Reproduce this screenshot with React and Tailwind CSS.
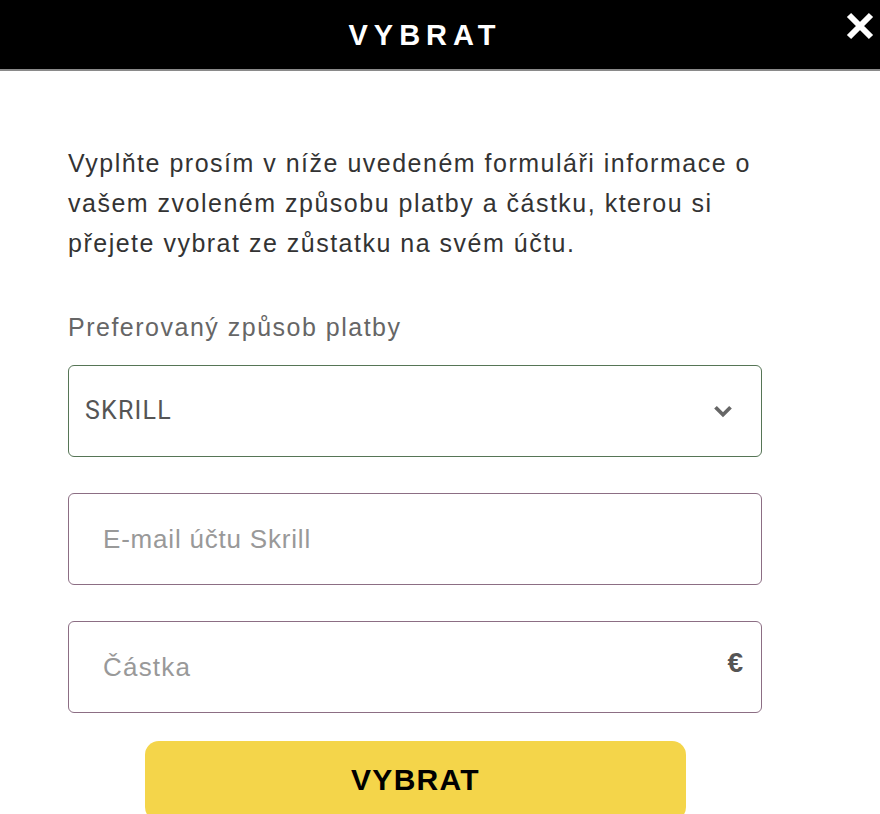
import React, { useState } from 'react';

const App = () => {
  const [method, setMethod] = useState('SKRILL');

  return (
    <div className="w-[880px] h-[814px] overflow-hidden bg-white font-['Liberation_Sans',Arial,sans-serif]">
      <div className="relative h-[71px] bg-black border-b-2 border-[#8a8a8a] flex items-center justify-center">
        <h1 className="text-white text-[29px] font-bold tracking-[6px] mr-[30px] pt-[2px]">VYBRAT</h1>
        <button className="absolute right-[5px] top-[11px] w-[30px] h-[30px] text-white">
          <svg viewBox="0 0 30 30" className="w-[30px] h-[30px]">
            <path d="M4 4 L26 26 M26 4 L4 26" stroke="white" strokeWidth="6" strokeLinecap="butt" />
          </svg>
        </button>
      </div>

      <div className="pl-[68px] pr-[100px] pt-[72px]">
        <p className="text-[#333] text-[25px] tracking-[1.5px] leading-[40px]">
          Vyplňte prosím v níže uvedeném formuláři informace o vašem zvoleném způsobu platby a částku, kterou si přejete vybrat ze zůstatku na svém účtu.
        </p>

        <div className="mt-[44px] text-[#666] text-[25px] tracking-[1.5px] leading-[40px]">Preferovaný způsob platby</div>

        <div className="mt-[18px] mr-[18px] flex flex-col gap-[36px]">
          <div className="h-[92px] border-[1.5px] border-[#567556] rounded-[6px] flex items-center justify-between pl-[16px] pr-[26px]">
            <span className="text-[#555] text-[25px] tracking-[1.2px] font-['Roboto',sans-serif]">{method}</span>
            <svg viewBox="0 0 20 14" className="w-[24px] h-[15px]">
              <path d="M3 3 L10 10 L17 3" fill="none" stroke="#666" strokeWidth="3.5" />
            </svg>
          </div>

          <div className="h-[92px] border-[1.5px] border-[#8c6e84] rounded-[6px] flex items-center pl-[34px]">
            <input
              placeholder="E-mail účtu Skrill"
              className="w-full outline-none text-[26px] tracking-[0.8px] placeholder:text-[#999] bg-transparent"
            />
          </div>

          <div className="relative h-[92px] border-[1.5px] border-[#8c6e84] rounded-[6px] flex items-center pl-[34px]">
            <input
              placeholder="Částka"
              className="w-full outline-none text-[26px] tracking-[1.2px] placeholder:text-[#999] bg-transparent"
            />
            <span className="absolute right-[18px] top-[20px] text-[#555] text-[28px] font-bold">€</span>
          </div>
        </div>

        <button
          onClick={() => setMethod(method)}
          className="mt-[28px] ml-[77px] w-[541px] h-[80px] rounded-[14px] bg-[#f4d54a] text-black text-[30px] tracking-[1.3px] font-bold flex items-center justify-center pb-[4px]"
        >
          VYBRAT
        </button>
      </div>
    </div>
  );
};

export default App;
